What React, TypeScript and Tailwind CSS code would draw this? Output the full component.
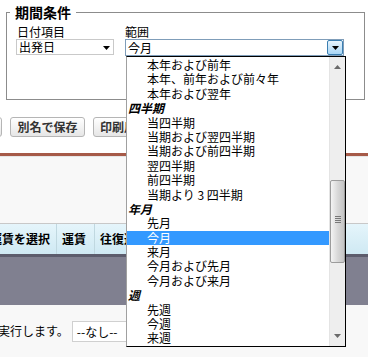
import React from "react";

type Item = { t: string; h?: boolean; sel?: boolean };

const items: Item[] = [
  { t: "本年および前年" },
  { t: "本年、前年および前々年" },
  { t: "本年および翌年" },
  { t: "四半期", h: true },
  { t: "当四半期" },
  { t: "当期および翌四半期" },
  { t: "当期および前四半期" },
  { t: "翌四半期" },
  { t: "前四半期" },
  { t: "当期より 3 四半期" },
  { t: "年月", h: true },
  { t: "先月" },
  { t: "今月", sel: true },
  { t: "来月" },
  { t: "今月および先月" },
  { t: "今月および来月" },
  { t: "週", h: true },
  { t: "先週" },
  { t: "今週" },
  { t: "来週" },
];

function Arrow({ className }: { className?: string }) {
  return (
    <svg width="7" height="4" viewBox="0 0 7 4" className={className}>
      <path d="M0 0h7L3.5 4z" fill="#000" />
    </svg>
  );
}

export default function App() {
  return (
    <div className="relative w-[368px] h-[357px] overflow-hidden bg-white text-black text-[12px] leading-[14px] [font-family:'Noto_Sans_CJK_JP','Liberation_Sans',sans-serif]">
      {/* period conditions */}
      <div className="pt-[5px] pl-[6px]">
        <fieldset className="w-[359px] h-[95px] border border-[#8c8c8c] pl-[3px]">
          <legend className="px-[5px] text-[14px] font-bold leading-[14px]">期間条件</legend>
          <div className="flex gap-[11px] pl-[6px] pt-[6px]">
            <div className="flex flex-col w-[98px]">
              <span className="h-[14px] pl-[1px]">日付項目</span>
              <div className="h-[16px] border border-[#c9c9c9] bg-white flex items-center justify-between pl-[2px] pr-[3px]">
                <span>出発日</span>
                <Arrow className="mt-[2px]" />
              </div>
            </div>
            <div className="flex flex-col w-[219px]">
              <span className="h-[14px]">範囲</span>
              <div className="h-[17px] border border-[#7f9db9] bg-white flex items-center justify-between pl-[2px]">
                <span>今月</span>
                <div className="w-[16px] h-[15px] border border-[#3c7fb1] rounded-[2px] bg-gradient-to-b from-[#e6f4fd] to-[#a9d6f5] flex items-center justify-center">
                  <Arrow />
                </div>
              </div>
            </div>
          </div>
        </fieldset>
      </div>

      {/* buttons */}
      <div className="flex gap-[8px] mt-[17px] ml-[-60px]">
        <button className="h-[20px] w-[62px] border border-[#b5b5b5] rounded-[3px] bg-gradient-to-b from-white to-[#e6e6e6]" />
        <button className="h-[20px] w-[75px] border border-[#b5b5b5] rounded-[3px] bg-gradient-to-b from-white to-[#e6e6e6] font-bold text-[#333] text-[12px] leading-[18px]">別名で保存</button>
        <button className="h-[20px] px-[6px] border border-[#b5b5b5] rounded-[3px] bg-gradient-to-b from-white to-[#e6e6e6] font-bold text-[#333] text-[12px] leading-[18px]">印刷用に表示</button>
      </div>

      {/* red rule */}
      <div className="mt-[16px] h-[3px] bg-[#a65a48]" />
      <div className="h-[67px] bg-[#f8f8f8] border-t border-[#e6e6e6]" />

      {/* table header */}
      <div className="border-t border-[#c8c8c8] h-[31px] flex bg-gradient-to-b from-[#e5f5fb] to-[#cfe9f3] font-bold">
        <div className="w-[57px] border-r border-[#c0d8e0] flex items-center whitespace-nowrap overflow-hidden justify-end pr-[6px]">運賃を選択</div>
        <div className="w-[38px] border-r border-[#c0d8e0] flex items-center pl-[5px]">運賃</div>
        <div className="flex-1 flex items-center pl-[5px]">往復運賃</div>
      </div>
      <div className="h-[3px] bg-[#5c5c6c]" />
      <div className="h-[48px] bg-[#808090]" />

      {/* bottom */}
      <div className="h-[60px] bg-[#f8f8f8] flex items-start pt-[16px]">
        <span className="leading-[14px] mt-[3px] ml-[-2px] whitespace-nowrap">実行します。</span>
        <div className="ml-[3px] h-[21px] w-[120px] border border-[#d0d0d0] bg-white pl-[4px] leading-[19px]">--なし--</div>
      </div>

      {/* dropdown list */}
      <div className="absolute left-[126px] top-[56px] w-[220px] h-[291px] bg-white border border-black border-l-[#a0a0a0] flex">
        <div className="flex-1 pt-[1px] overflow-hidden">
          {items.map((it, i) => (
            <div
              key={i}
              className={
                "h-[14.4px] leading-[14.4px] whitespace-nowrap " +
                (it.h
                  ? "pl-[1px] font-bold italic"
                  : it.sel
                  ? "pl-[20px] bg-[#3399ff] text-white"
                  : "pl-[20px]")
              }
            >
              {it.t}
            </div>
          ))}
        </div>
        <div className="w-[16px] h-full bg-[#eeeeee] border-l border-[#e4e4e4] relative">
          <svg width="7" height="4" viewBox="0 0 7 4" className="absolute left-[4px] top-[8px]">
            <path d="M0 4h7L3.5 0z" fill="#6a6a6a" />
          </svg>
          <div className="absolute left-[0px] top-[123px] w-[15px] h-[83px] rounded-[2px] border border-[#9c9c9c] bg-gradient-to-r from-[#f4f4f4] via-[#d9d9d9] to-[#c4c4c4] flex items-center justify-center">
            <div className="flex flex-col gap-[1px] mt-[-4px]">
              <div className="w-[6px] h-[1px] bg-[#777]" />
              <div className="w-[6px] h-[1px] bg-[#777]" />
              <div className="w-[6px] h-[1px] bg-[#777]" />
              <div className="w-[6px] h-[1px] bg-[#777]" />
            </div>
          </div>
          <svg width="7" height="4" viewBox="0 0 7 4" className="absolute left-[4px] bottom-[8px]">
            <path d="M0 0h7L3.5 4z" fill="#6a6a6a" />
          </svg>
        </div>
      </div>
    </div>
  );
}
